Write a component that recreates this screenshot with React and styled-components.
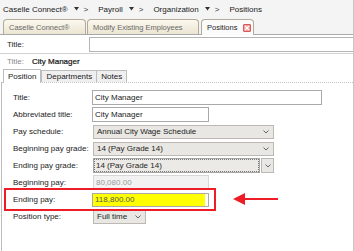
import React from 'react';
import styled, { createGlobalStyle } from 'styled-components';

const Global = createGlobalStyle`
  html, body { margin: 0; padding: 0; background: #fff; }
  body { font-family: "Liberation Sans", Arial, sans-serif; }
`;

const Frame = styled.div`
  position: relative;
  width: 354px;
  height: 251px;
  box-sizing: border-box;
  background: #fff;
  overflow: hidden;
  border-right: 1px solid #c6c6c6;
  font-size: 8px;
  color: #1e1e1e;
`;

const Crumbs = styled.div`
  height: 18px;
  display: flex;
  align-items: center;
  padding-left: 3px;
  background: #f4f4f4;
  font-size: 8px;
  color: #1a1a1a;
`;

const SepWrap = styled.span`
  display: inline-flex;
  align-items: center;
  gap: 5px;
  margin: 0 10px 0 6px;
  color: #333;
`;

const Sep = () => (
  <SepWrap>
    <svg width="5" height="4" viewBox="0 0 5 4">
      <polygon points="0,0 5,0 2.5,3.5" fill="#333" />
    </svg>
    <span>&gt;</span>
  </SepWrap>
);

const TabStrip = styled.div`
  height: 16px;
  display: flex;
  align-items: flex-end;
  padding-left: 3px;
  gap: 1px;
  background: #f4f4f4;
  border-bottom: 1px solid #a8a8a8;
`;

const Tab = styled.div`
  box-sizing: border-box;
  height: ${p => (p.$active ? 16 : 15)}px;
  width: ${p => p.$w}px;
  margin-bottom: ${p => (p.$active ? -1 : 0)}px;
  margin-left: ${p => (p.$active ? 1 : 0)}px;
  display: flex;
  align-items: center;
  gap: 6px;
  padding-left: 5px;
  border: 1px solid #b2aa98;
  border-bottom: none;
  border-radius: 4px 4px 0 0;
  background: ${p => (p.$active ? '#fbfbfb' : 'linear-gradient(#fbf8ef, #ebe5d2)')};
  color: ${p => (p.$active ? '#222' : '#6a6a6a')};
  font-size: 7.5px;
  white-space: nowrap;
`;

const CloseBox = styled.span`
  width: 8px;
  height: 8px;
  box-sizing: border-box;
  display: inline-flex;
  align-items: center;
  justify-content: center;
  background: #f09a98;
  border: 1px solid #d55a58;
  border-radius: 1px;
`;

const TitleBar = styled.div`
  height: 18px;
  display: flex;
  align-items: center;
  padding-left: 7px;
  border-bottom: 1px solid #d2d2d2;
`;

const TopLabel = styled.span`
  width: 82px;
  flex: none;
`;

const TopInput = styled.div`
  flex: 1;
  height: 15px;
  box-sizing: border-box;
  margin-right: -3px;
  border: 1px solid #b4b4b4;
  background: #fff;
`;

const Record = styled.div`
  height: 15px;
  display: flex;
  align-items: center;
  padding-left: 7px;
  gap: 8px;
`;

const Muted = styled.span`
  color: #8a8a8a;
`;

const Strong = styled.span`
  color: #111;
  -webkit-text-stroke: 0.2px #111;
`;

const SubTabs = styled.div`
  height: 13px;
  display: flex;
  align-items: flex-end;
  padding-left: 3px;
`;

const SubTab = styled.div`
  box-sizing: border-box;
  height: ${p => (p.$active ? 14 : 12)}px;
  margin-bottom: ${p => (p.$active ? -1 : 0)}px;
  padding: 0 4px;
  display: flex;
  align-items: center;
  border: 1px solid #bdbdbd;
  border-bottom: none;
  border-right: ${p => (p.$last || p.$active ? '1px solid #bdbdbd' : 'none')};
  background: ${p => (p.$active ? '#fff' : '#efefef')};
  color: #222;
  position: relative;
  z-index: ${p => (p.$active ? 1 : 0)};
`;

const Panel = styled.div`
  box-sizing: border-box;
  margin-left: 1px;
  width: 352px;
  height: 170px;
  border: 1px solid #bcbcbc;
  border-right: none;
  border-top: 1px dotted #c4c4c4;
  padding-top: 6px;
`;

const Row = styled.div`
  box-sizing: border-box;
  height: 17px;
  display: flex;
  align-items: center;
  padding-left: 11px;
`;

const MarkedRow = styled(Row)`
  width: 206px;
  margin-left: 5px;
  padding-left: 6px;
  outline: 2px solid #ee1c24;
  outline-offset: 1px;
`;

const Label = styled.span`
  width: 79px;
  flex: none;
  color: #222;
`;

const Field = styled.div`
  box-sizing: border-box;
  width: ${p => p.$w}px;
  height: ${p => p.$h || 15}px;
  display: flex;
  align-items: center;
  padding-left: 2px;
  border: 1px solid ${p => (p.$disabled ? '#d6d6d6' : '#a9a9a9')};
  background: ${p => (p.$disabled ? '#f2f2f2' : p.$mark ? 'linear-gradient(90deg, #ffff00 0 112px, #fff 112px)' : '#fff')};
  color: ${p => (p.$disabled ? '#9a9a9a' : p.$mark ? '#555' : '#222')};
  margin-left: ${p => p.$shift || 0}px;
`;

const Select = styled.div`
  box-sizing: border-box;
  width: ${p => p.$w}px;
  height: 14px;
  display: flex;
  align-items: center;
  justify-content: space-between;
  padding: 0 4px 0 3px;
  margin-left: 1px;
  border: 1px solid #bdb9b2;
  background: #e9e7e3;
  color: #222;
`;

const Combo = styled.div`
  box-sizing: border-box;
  width: ${p => p.$w}px;
  height: 15px;
  display: flex;
  margin-left: 1px;
  gap: 1px;
`;

const ComboText = styled.div`
  flex: 1;
  box-sizing: border-box;
  display: flex;
  align-items: center;
  padding-left: 2px;
  border: 1px solid #a5a5a5;
  outline: 1px dotted #777;
  outline-offset: -2px;
  background: #eceae6;
`;

const ComboBtn = styled.div`
  width: 13px;
  box-sizing: border-box;
  display: flex;
  align-items: center;
  justify-content: center;
  border: 1px solid #bdb9b2;
  background: #e9e7e3;
`;

const Chevron = () => (
  <svg width="6" height="4" viewBox="0 0 6 4">
    <polyline points="0.5,0.5 3,3 5.5,0.5" fill="none" stroke="#666" strokeWidth="1" />
  </svg>
);

const Arrow = styled.svg`
  position: absolute;
  left: 233px;
  top: 192px;
`;

export default function App() {
  return (
    <>
      <Global />
      <Frame>
        <Crumbs>
          <span>Caselle Connect®</span>
          <Sep />
          <span>Payroll</span>
          <Sep />
          <span>Organization</span>
          <Sep />
          <span>Positions</span>
        </Crumbs>
        <TabStrip>
          <Tab $w={83}>Caselle Connect®</Tab>
          <Tab $w={112}>Modify Existing Employees</Tab>
          <Tab $w={53} $active>
            Positions
            <CloseBox>
              <svg width="6" height="6" viewBox="0 0 6 6">
                <path d="M1 1L5 5M5 1L1 5" stroke="#fff" strokeWidth="1.3" />
              </svg>
            </CloseBox>
          </Tab>
        </TabStrip>
        <TitleBar>
          <TopLabel>Title:</TopLabel>
          <TopInput />
        </TitleBar>
        <Record>
          <Muted>Title:</Muted>
          <Strong>City Manager</Strong>
        </Record>
        <SubTabs>
          <SubTab $active>Position</SubTab>
          <SubTab>Departments</SubTab>
          <SubTab $last>Notes</SubTab>
        </SubTabs>
        <Panel>
          <Row>
            <Label>Title:</Label>
            <Field $w={230}>City Manager</Field>
          </Row>
          <Row>
            <Label>Abbreviated title:</Label>
            <Field $w={117}>City Manager</Field>
          </Row>
          <Row>
            <Label>Pay schedule:</Label>
            <Select $w={181}>Annual City Wage Schedule<Chevron /></Select>
          </Row>
          <Row>
            <Label>Beginning pay grade:</Label>
            <Select $w={181}>14 (Pay Grade 14)<Chevron /></Select>
          </Row>
          <Row>
            <Label>Ending pay grade:</Label>
            <Combo $w={181}>
              <ComboText>14 (Pay Grade 14)</ComboText>
              <ComboBtn><Chevron /></ComboBtn>
            </Combo>
          </Row>
          <Row>
            <Label>Beginning pay:</Label>
            <Field $w={116} $shift={1} $disabled>80,080.00</Field>
          </Row>
          <MarkedRow>
            <Label>Ending pay:</Label>
            <Field $w={117} $h={14} $mark>118,800.00</Field>
          </MarkedRow>
          <Row>
            <Label>Position type:</Label>
            <Select $w={53}>Full time<Chevron /></Select>
          </Row>
        </Panel>
        <Arrow width="46" height="14" viewBox="0 0 46 14">
          <line x1="10" y1="7" x2="45" y2="7" stroke="#ee1c24" strokeWidth="2" />
          <polygon points="0,7 12,1 12,13" fill="#ee1c24" />
        </Arrow>
      </Frame>
    </>
  );
}
